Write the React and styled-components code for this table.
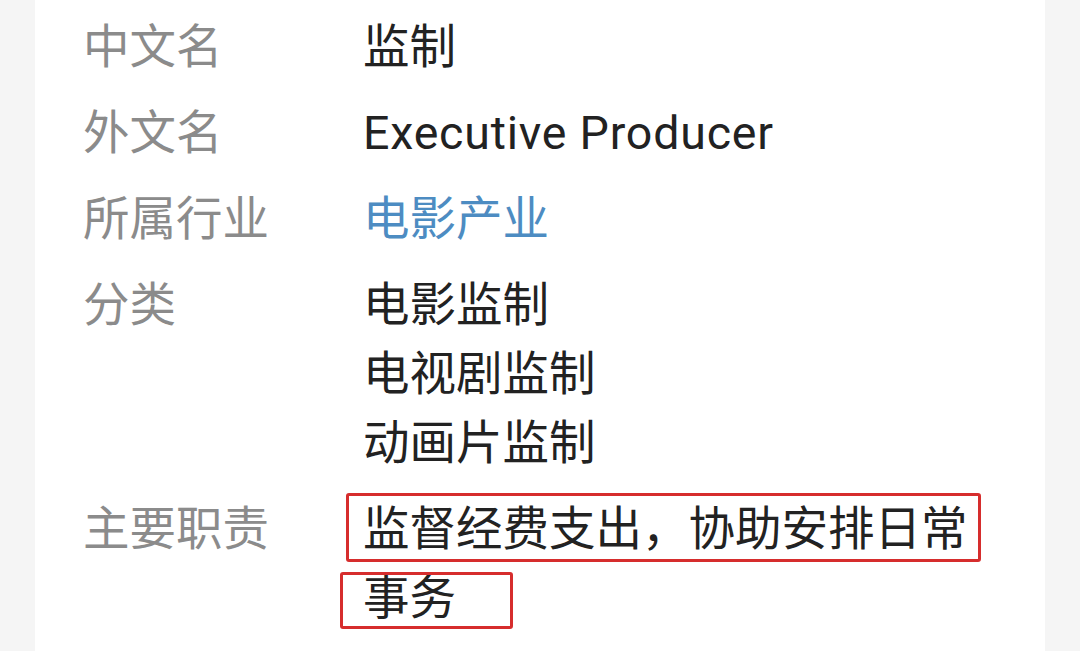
import React from 'react'
import styled, { createGlobalStyle } from 'styled-components'

const Global = createGlobalStyle`
body{
  margin:0;
  background:#f5f5f5;
  font-family:Roboto,"Noto Sans CJK SC",sans-serif;
}
`

const rows = [
  { label: '中文名', values: ['监制'] },
  { label: '外文名', values: ['Executive Producer'], latin: true },
  { label: '所属行业', values: ['电影产业'], link: true },
  { label: '分类', values: ['电影监制', '电视剧监制', '动画片监制'] },
]

function App() {
  return (
    <>
      <Global />
      <Page>
        <Card>
          {rows.map(r => (
            <Row key={r.label}>
              <Label>{r.label}</Label>
              <Value $link={r.link} $latin={r.latin}>
                {r.values.map(v => <Line key={v}>{v}</Line>)}
              </Value>
            </Row>
          ))}
          <Row>
            <Label>主要职责</Label>
            <Value>
              <Marked>
                监督经费支出，协助安排日常事务
                <Box $top={-2} $left={-17} $w={635} $h={69} />
                <Box $top={77} $left={-23} $w={173} $h={57} />
              </Marked>
            </Value>
          </Row>
        </Card>
      </Page>
    </>
  )
}

const Page = styled.div`
width:1080px;
height:651px;
overflow:hidden;
padding:0 35px;
box-sizing:border-box;
`

const Card = styled.div`
background:#fff;
height:100%;
padding:13px 0 0 48px;
display:flex;
flex-direction:column;
gap:17px;
box-sizing:border-box;
`

const Row = styled.div`
display:flex;
font-size:46.5px;
line-height:69px;
`

const Label = styled.div`
width:280px;
flex-shrink:0;
color:#8b8b8b;
`

const Value = styled.div`
width:620px;
color:${p => (p.$link ? '#4d8cc2' : '#222')};
letter-spacing:${p => (p.$latin ? '0.8px' : '0')};
`

const Line = styled.div``

const Marked = styled.div`
position:relative;
`

const Box = styled.span`
position:absolute;
top:${p => p.$top}px;
left:${p => p.$left}px;
width:${p => p.$w}px;
height:${p => p.$h}px;
border:3px solid #d62d2d;
border-radius:3px;
box-sizing:border-box;
`

export default App
